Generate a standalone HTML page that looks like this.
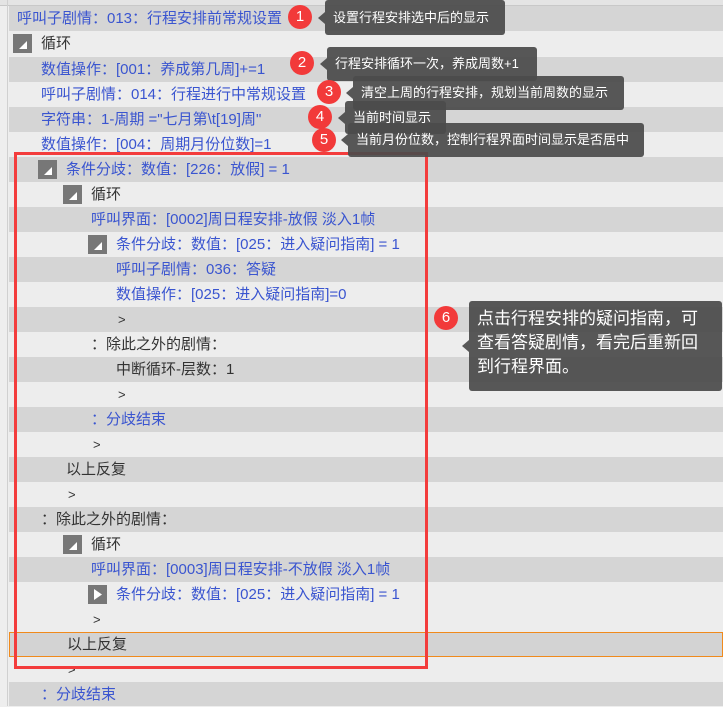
<!DOCTYPE html>
<html><head><meta charset="utf-8"><style>
*{margin:0;padding:0;box-sizing:border-box}
body{width:723px;height:706px;overflow:hidden;background:#eeeeee;position:relative;font-family:"Liberation Sans","Noto Sans CJK SC",sans-serif;font-size:15px}
.r{position:absolute;left:9px;width:714px;height:25px;line-height:25px;white-space:nowrap}
.d{background:#d5d5d5}.l{background:#ededed}
.b{color:#3a55d0}.k{color:#333}
.t{position:absolute;top:0}
.ic{position:absolute;top:3px;width:19px;height:19px;background:#777}
.ic svg{position:absolute;left:0;top:0}
.c{position:absolute;width:24px;height:24px;border-radius:50%;background:#f23a3a;color:#fff;font-size:15px;line-height:24px;text-align:center}
.tip{position:absolute;background:rgba(75,75,75,.93);color:#fff;font-size:13px;border-radius:3px;white-space:nowrap;padding-left:8px}
.tip:before{content:"";position:absolute;left:-7px;top:50%;margin-top:-6px;border-style:solid;border-width:6px 7px 6px 0;border-color:transparent rgba(75,75,75,.93) transparent transparent}
</style></head><body>
<div style="position:absolute;left:0;top:0;width:723px;height:6px;background:#e4e4e4;border-bottom:1px solid #c8c8c8"></div>
<div style="position:absolute;left:7px;top:0;width:1px;height:706px;background:#d0d0d0"></div>

<div class="r d b" style="top:6px"><span class="t" style="left:8px">呼叫子剧情：013：行程安排前常规设置</span></div>
<div class="r l k" style="top:31px"><span class="ic" style="left:4px"><svg width="19" height="19"><polygon points="6,15 14,15 14,7" fill="#fff"/></svg></span><span class="t" style="left:32px">循环</span></div>
<div class="r d b" style="top:57px"><span class="t" style="left:32px">数值操作：[001：养成第几周]+=1</span></div>
<div class="r l b" style="top:82px"><span class="t" style="left:32px">呼叫子剧情：014：行程进行中常规设置</span></div>
<div class="r d b" style="top:107px"><span class="t" style="left:32px">字符串：1-周期 ="七月第\t[19]周"</span></div>
<div class="r l b" style="top:132px"><span class="t" style="left:32px">数值操作：[004：周期月份位数]=1</span></div>
<div class="r d b" style="top:157px"><span class="ic" style="left:29px"><svg width="19" height="19"><polygon points="6,15 14,15 14,7" fill="#fff"/></svg></span><span class="t" style="left:57px">条件分歧：数值：[226：放假] = 1</span></div>
<div class="r l k" style="top:182px"><span class="ic" style="left:54px"><svg width="19" height="19"><polygon points="6,15 14,15 14,7" fill="#fff"/></svg></span><span class="t" style="left:82px">循环</span></div>
<div class="r d b" style="top:207px"><span class="t" style="left:82px">呼叫界面：[0002]周日程安排-放假 淡入1帧</span></div>
<div class="r l b" style="top:232px"><span class="ic" style="left:79px"><svg width="19" height="19"><polygon points="6,15 14,15 14,7" fill="#fff"/></svg></span><span class="t" style="left:107px">条件分歧：数值：[025：进入疑问指南] = 1</span></div>
<div class="r d b" style="top:257px"><span class="t" style="left:107px">呼叫子剧情：036：答疑</span></div>
<div class="r l b" style="top:282px"><span class="t" style="left:107px">数值操作：[025：进入疑问指南]=0</span></div>
<div class="r d k" style="top:307px"><span class="t" style="left:109px;font-size:13px">&gt;</span></div>
<div class="r l k" style="top:332px"><span class="t" style="left:82px">：除此之外的剧情：</span></div>
<div class="r d k" style="top:357px"><span class="t" style="left:107px">中断循环-层数：1</span></div>
<div class="r l k" style="top:382px"><span class="t" style="left:109px;font-size:13px">&gt;</span></div>
<div class="r d b" style="top:407px"><span class="t" style="left:82px">：分歧结束</span></div>
<div class="r l k" style="top:432px"><span class="t" style="left:84px;font-size:13px">&gt;</span></div>
<div class="r d k" style="top:457px"><span class="t" style="left:57px">以上反复</span></div>
<div class="r l k" style="top:482px"><span class="t" style="left:59px;font-size:13px">&gt;</span></div>
<div class="r d k" style="top:507px"><span class="t" style="left:32px">：除此之外的剧情：</span></div>
<div class="r l k" style="top:532px"><span class="ic" style="left:54px"><svg width="19" height="19"><polygon points="6,15 14,15 14,7" fill="#fff"/></svg></span><span class="t" style="left:82px">循环</span></div>
<div class="r d b" style="top:557px"><span class="t" style="left:82px">呼叫界面：[0003]周日程安排-不放假 淡入1帧</span></div>
<div class="r l b" style="top:582px"><span class="ic" style="left:79px"><svg width="19" height="19"><polygon points="6,4 14,9.5 6,15" fill="#fff"/></svg></span><span class="t" style="left:107px">条件分歧：数值：[025：进入疑问指南] = 1</span></div>
<div class="r l k" style="top:607px"><span class="t" style="left:84px;font-size:13px">&gt;</span></div>
<div class="r k" style="top:632px;background:#d3d3d3;border:1px solid #f08a1c;line-height:23px"><span class="t" style="left:57px">以上反复</span></div>
<div class="r l k" style="top:657px"><span class="t" style="left:59px;font-size:13px">&gt;</span></div>
<div class="r d b" style="top:682px;height:24px"><span class="t" style="left:32px">：分歧结束</span></div>

<div style="position:absolute;left:14px;top:152px;width:414px;height:517px;border:3px solid #f33c3c"></div>

<div class="tip" style="left:325px;top:0;width:180px;height:35px;line-height:35px">设置行程安排选中后的显示</div>
<div class="c" style="left:288px;top:5px">1</div>
<div class="tip" style="left:327px;top:47px;width:210px;height:34px;line-height:34px">行程安排循环一次，养成周数+1</div>
<div class="c" style="left:290px;top:51px">2</div>
<div class="tip" style="left:353px;top:76px;width:271px;height:34px;line-height:34px">清空上周的行程安排，规划当前周数的显示</div>
<div class="c" style="left:317px;top:80px">3</div>
<div class="tip" style="left:345px;top:101px;width:101px;height:33px;line-height:33px">当前时间显示</div>
<div class="c" style="left:308px;top:105px">4</div>
<div class="tip" style="left:348px;top:123px;width:296px;height:34px;line-height:34px">当前月份位数，控制行程界面时间显示是否居中</div>
<div class="c" style="left:312px;top:128px">5</div>
<div class="tip" style="left:469px;top:301px;width:253px;height:90px;font-size:17px;line-height:24px;padding-top:6px;white-space:normal">点击行程安排的疑问指南，可<br>查看答疑剧情，看完后重新回<br>到行程界面。</div>
<div class="c" style="left:434px;top:306px">6</div>
</body></html>
